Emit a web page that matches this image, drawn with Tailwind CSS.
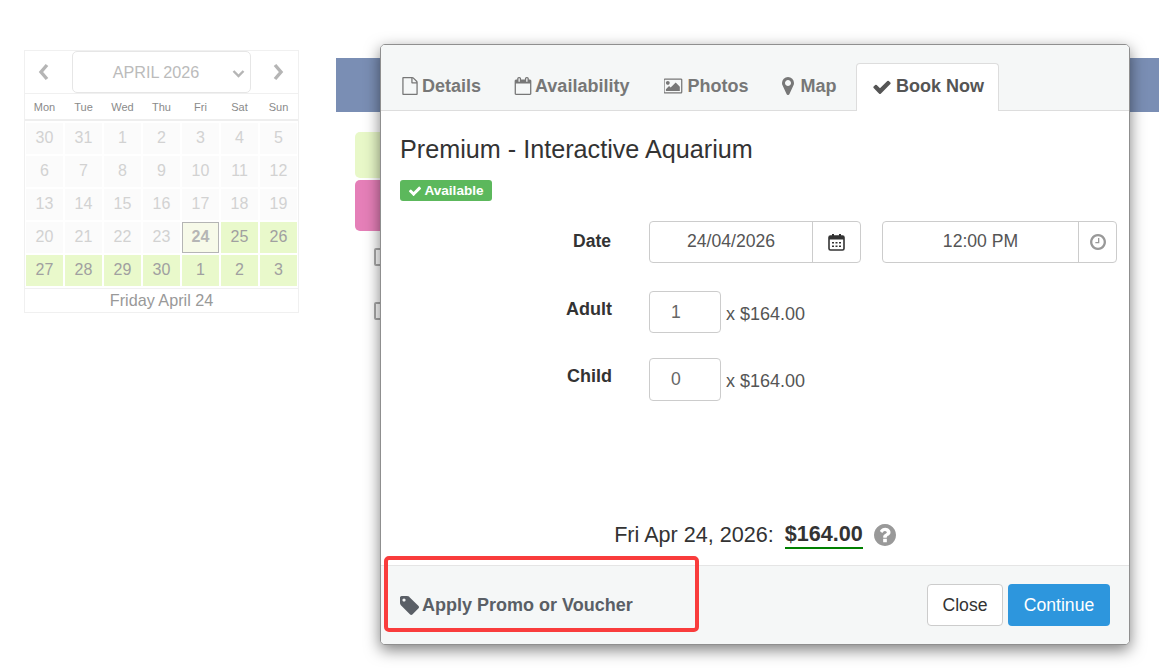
<!DOCTYPE html>
<html lang="en">
<head>
  <meta charset="UTF-8">
  <title>Book Now</title>
  <script src="https://cdn.jsdelivr.net/npm/@tailwindcss/browser@4"></script>
</head>
<body class="bg-white font-['Liberation_Sans',Arial,sans-serif] text-[#333]">
<div class="relative w-[1159px] h-[669px] overflow-hidden">

  <!-- page behind the modal -->
  <div class="flex items-start pt-[50px] pl-[24px]">
    <!-- calendar -->
    <div class="w-[275px] h-[263px] border border-[#f0f0f0] flex flex-col shrink-0">
      <div class="flex items-center h-[43px] border-b border-[#f0f0f0]">
        <div class="w-[47px] flex justify-center pr-[10px]">
          <svg class="w-[14px] h-[18px]" viewBox="0 0 14 18"><path d="M10 2 L4 9 L10 16" fill="none" stroke="#b5b5b5" stroke-width="3.4"/></svg>
        </div>
        <div class="relative w-[179px] h-[42px] border border-[#e6e6e6] rounded-[5px] flex items-center justify-center pt-[1px] text-[16.200px] text-[#bbb] pr-[11px]">APRIL 2026
          <svg class="absolute right-[5px] top-[17px] w-[13px] h-[10px]" viewBox="0 0 13 10"><path d="M1.500 2 L6.500 7 L11.500 2" fill="none" stroke="#b5b5b5" stroke-width="2.400"/></svg>
        </div>
        <div class="flex-1 flex justify-center pl-[6px]">
          <svg class="w-[14px] h-[18px]" viewBox="0 0 14 18"><path d="M4 2 L10 9 L4 16" fill="none" stroke="#b5b5b5" stroke-width="3.4"/></svg>
        </div>
      </div>
      <div class="grid grid-cols-[repeat(7,37px)] gap-x-[2px] px-[1px] pt-[1px] h-[27px] items-center text-center text-[11px] text-[#8a8a8a] border-b-2 border-[#eee]">
        <span>Mon</span><span>Tue</span><span>Wed</span><span>Thu</span><span>Fri</span><span>Sat</span><span>Sun</span>
      </div>
      <div class="grid grid-cols-[repeat(7,37px)] auto-rows-[31px] gap-[2px] px-[1px] pt-[2px] text-[16px] text-center leading-[30px] text-[#d2d2d2]">
        <div class="bg-[#fbfbfb]">30</div><div class="bg-[#fbfbfb]">31</div><div class="bg-[#fbfbfb]">1</div><div class="bg-[#fbfbfb]">2</div><div class="bg-[#fbfbfb]">3</div><div class="bg-[#fbfbfb]">4</div><div class="bg-[#fbfbfb]">5</div>
        <div class="bg-[#fbfbfb]">6</div><div class="bg-[#fbfbfb]">7</div><div class="bg-[#fbfbfb]">8</div><div class="bg-[#fbfbfb]">9</div><div class="bg-[#fbfbfb]">10</div><div class="bg-[#fbfbfb]">11</div><div class="bg-[#fbfbfb]">12</div>
        <div class="bg-[#fbfbfb]">13</div><div class="bg-[#fbfbfb]">14</div><div class="bg-[#fbfbfb]">15</div><div class="bg-[#fbfbfb]">16</div><div class="bg-[#fbfbfb]">17</div><div class="bg-[#fbfbfb]">18</div><div class="bg-[#fbfbfb]">19</div>
        <div class="bg-[#fbfbfb]">20</div><div class="bg-[#fbfbfb]">21</div><div class="bg-[#fbfbfb]">22</div><div class="bg-[#fbfbfb]">23</div>
        <div class="bg-[#f7fae9] border border-[#b5b5b5] font-bold text-[#b5b5b5] leading-[28px]">24</div>
        <div class="bg-[#e9f9cb] text-[#a0a0a0]">25</div><div class="bg-[#e9f9cb] text-[#a0a0a0]">26</div>
        <div class="bg-[#e9f9cb] text-[#a0a0a0]">27</div><div class="bg-[#e9f9cb] text-[#a0a0a0]">28</div><div class="bg-[#e9f9cb] text-[#a0a0a0]">29</div><div class="bg-[#e9f9cb] text-[#a0a0a0]">30</div><div class="bg-[#e9f9cb] text-[#a0a0a0]">1</div><div class="bg-[#e9f9cb] text-[#a0a0a0]">2</div><div class="bg-[#e9f9cb] text-[#a0a0a0]">3</div>
      </div>
      <div class="mt-[2px] flex-1 border-t border-[#f0f0f0] text-center text-[16.200px] leading-[23px] text-[#999]">Friday April 24</div>
    </div>

    <!-- listing column, mostly hidden by the modal -->
    <div class="ml-[37px] pt-[8px] flex-1 min-w-0">
      <div class="h-[54px] bg-[#7a8eb4]"></div>
      <div class="ml-[19px] mt-[20px] flex flex-col gap-[2px]">
        <div class="w-[60px] h-[46px] rounded-[5px] bg-[#e8f8c8]"></div>
        <div class="w-[60px] h-[51px] rounded-[5px] bg-[#e57fb8]"></div>
      </div>
      <div class="ml-[19px] pl-[19px] mt-[17px] flex flex-col gap-[36px]">
        <div class="w-[14px] h-[18px] rounded-[2px] border-2 border-[#aaa]"></div>
        <div class="w-[14px] h-[18px] rounded-[2px] border-2 border-[#aaa]"></div>
      </div>
    </div>
  </div>

  <!-- modal -->
  <div class="absolute left-[380px] top-[44px] w-[750px] h-[601px] flex flex-col bg-white border border-[#8f8f8f] rounded-[5px] shadow-[0_5px_15px_rgba(0,0,0,0.5)] overflow-hidden">
    <div class="h-[66px] shrink-0 bg-[#f5f7f7] border-b border-[#ddd] flex items-end pl-[10px]">
      <div class="h-[65px] flex items-center gap-[5px] px-[10px] pt-[17px] text-[18px] font-bold text-[#777]">
        <svg class="w-[18px] h-[18px]" viewBox="0 0 1792 1792" fill="#777"><path d="M1596 380q28 28 48 76t20 88v1152q0 40-28 68t-68 28h-1344q-40 0-68-28t-28-68v-1600q0-40 28-68t68-28h896q40 0 88 20t76 48zm-444-244v376h376q-10-29-22-41l-313-313q-12-12-41-22zm384 1528v-1024h-416q-40 0-68-28t-28-68v-416h-768v1536h1280z"/></svg>
        <span class="-ml-[2px]">Details</span>
      </div>
      <div class="h-[65px] flex items-center gap-[3px] ml-[13px] px-[10px] pt-[17px] text-[18px] font-bold text-[#777]">
        <svg class="w-[18px] h-[18px]" viewBox="0 0 1792 1792" fill="#777"><path d="M192 1664h1408v-1024h-1408v1024zm384-1216v-288q0-14-9-23t-23-9h-64q-14 0-23 9t-9 23v288q0 14 9 23t23 9h64q14 0 23-9t9-23zm768 0v-288q0-14-9-23t-23-9h-64q-14 0-23 9t-9 23v288q0 14 9 23t23 9h64q14 0 23-9t9-23zm384-64v1280q0 52-38 90t-90 38h-1408q-52 0-90-38t-38-90v-1280q0-52 38-90t90-38h128v-96q0-66 47-113t113-47h64q66 0 113 47t47 113v96h384v-96q0-66 47-113t113-47h64q66 0 113 47t47 113v96h128q52 0 90 38t38 90z"/></svg>
        <span>Availability</span>
      </div>
      <div class="h-[65px] flex items-center gap-[4px] ml-[15px] px-[10px] pt-[17px] text-[18px] font-bold text-[#777]">
        <svg class="w-[19px] h-[18px]" viewBox="0 0 1920 1792" fill="#777"><path d="M576 576q0 80-56 136t-136 56-136-56-56-136 56-136 136-56 136 56 56 136zm1024 384v448h-1408v-192l320-320 160 160 512-512zm96-704h-1600q-13 0-22.500 9.500t-9.500 22.500v1216q0 13 9.500 22.500t22.500 9.500h1600q13 0 22.500-9.500t9.500-22.500v-1216q0-13-9.500-22.500t-22.500-9.500zm160 32v1216q0 66-47 113t-113 47h-1600q-66 0-113-47t-47-113v-1216q0-66 47-113t113-47h1600q66 0 113 47t47 113z"/></svg>
        <span>Photos</span>
      </div>
      <div class="h-[65px] flex items-center gap-[6px] ml-[14px] px-[10px] pt-[17px] text-[18px] font-bold text-[#777]">
        <svg class="w-[12px] h-[18px]" viewBox="0 128 1024 1536" fill="#777"><path d="M768 640q0-106-75-181t-181-75-181 75-75 181 75 181 181 75 181-75 75-181zm256 0q0 109-33 179l-364 774q-16 33-47.500 52t-67.500 19-67.500-19-46.500-52l-365-774q-33-70-33-179 0-212 150-362t362-150 362 150 150 362z"/></svg>
        <span>Map</span>
      </div>
      <div class="relative top-[1px] h-[48px] ml-[10px] w-[143px] flex items-center justify-center gap-[4px] pb-[2px] bg-white border border-[#ddd] border-b-0 rounded-t-[4px] text-[18px] font-bold text-[#555]">
        <svg class="w-[20px] h-[20px]" viewBox="0 0 1792 1792" fill="#555"><path d="M1671 566q0 40-28 68l-724 724-136 136q-28 28-68 28t-68-28l-136-136-362-362q-28-28-28-68t28-68l136-136q28-28 68-28t68 28l294 295 656-657q28-28 68-28t68 28l136 136q28 28 28 68z"/></svg>
        <span>Book Now</span>
      </div>
    </div>

    <div class="flex-1 flex flex-col min-h-0 pl-[19px] pr-[12px] pt-[26px] pb-[16px]">
      <h2 class="text-[25.200px] leading-[25px] text-[#333]">Premium - Interactive Aquarium</h2>
      <div class="mt-[18px] w-[92px] h-[21px] bg-[#5cb85c] rounded-[3px] flex items-center justify-center gap-[2px] pt-[1px] text-[13.600px] font-bold text-white">
        <svg class="w-[14px] h-[14px] -mt-[1px]" viewBox="0 0 1792 1792" fill="#fff"><path d="M1671 566q0 40-28 68l-724 724-136 136q-28 28-68 28t-68-28l-136-136-362-362q-28-28-28-68t28-68l136-136q28-28 68-28t68 28l294 295 656-657q28-28 68-28t68 28l136 136q28 28 28 68z"/></svg>
        <span>Available</span>
      </div>

      <div class="mt-[20px] flex items-center">
        <div class="w-[211px] mr-[1px] pb-[2px] text-right text-[17.500px] font-bold">Date</div>
        <div class="ml-[37px] w-[212px] h-[42px] flex border border-[#ccc] rounded-[4px]">
          <div class="flex-1 flex items-center justify-center pb-[1px] text-[17.600px] text-[#555]">24/04/2026</div>
          <div class="w-[48px] border-l border-[#ccc] flex items-center justify-center">
            <svg class="w-[17px] h-[18px]" viewBox="0 0 17 18"><rect x="1" y="3" width="15" height="14" rx="1.500" fill="#fff" stroke="#333" stroke-width="1.600"/><rect x="1" y="3" width="15" height="3.500" fill="#333"/><rect x="4" y="1" width="2" height="3.500" fill="#333"/><rect x="11" y="1" width="2" height="3.500" fill="#333"/><path d="M4 9h2v1.500H4zM7.500 9h2v1.500h-2zM11 9h2v1.500h-2zM4 12.500h2V14H4zM7.500 12.500h2V14h-2zM11 12.500h2V14h-2z" fill="#333"/></svg>
          </div>
        </div>
        <div class="ml-[21px] w-[235px] h-[42px] flex border border-[#ccc] rounded-[4px]">
          <div class="flex-1 flex items-center justify-center pb-[1px] text-[17.600px] text-[#555]">12:00 PM</div>
          <div class="w-[38px] border-l border-[#ccc] flex items-center justify-center">
            <svg class="w-[16px] h-[16px]" viewBox="128 128 1536 1536" fill="#999"><path d="M1024 544v448q0 14-9 23t-23 9h-320q-14 0-23-9t-9-23v-64q0-14 9-23t23-9h224v-352q0-14 9-23t23-9h64q14 0 23 9t9 23zm416 352q0-148-73-273t-198-198-273-73-273 73-198 198-73 273 73 273 198 198 273 73 273-73 198-198 73-273zm224 0q0 209-103 385.500t-279.500 279.500-385.500 103-385.500-103-279.500-279.500-103-385.500 103-385.500 279.500-279.500 385.500-103 385.500 103 279.500 279.500 103 385.500z"/></svg>
          </div>
        </div>
      </div>

      <div class="mt-[28px] flex items-start">
        <div class="w-[212px] pt-[5px] text-right text-[18px] font-bold">Adult</div>
        <div class="ml-[37px] w-[72px] h-[42px] border border-[#ccc] rounded-[4px] flex items-center pl-[21px] text-[17.600px] text-[#666]">1</div>
        <div class="ml-[5px] mt-[10px] text-[18px] text-[#555]">x $164.00</div>
      </div>

      <div class="mt-[25px] flex items-start">
        <div class="w-[212px] pt-[5px] text-right text-[18px] font-bold">Child</div>
        <div class="ml-[37px] w-[72px] h-[43px] border border-[#ccc] rounded-[4px] flex items-center pl-[21px] text-[17.600px] text-[#666]">0</div>
        <div class="ml-[5px] mt-[10px] text-[18px] text-[#555]">x $164.00</div>
      </div>

      <div class="mt-auto flex items-center justify-center pr-[7px] text-[21.600px] leading-[26px]">
        <span>Fri Apr 24, 2026:</span>
        <span class="ml-[11px] font-bold border-b-2 border-[#008000]">$164.00</span>
        <svg class="ml-[11px] w-[22px] h-[22px]" viewBox="128 128 1536 1536" fill="#999"><path d="M1024 1376v-192q0-14-9-23t-23-9h-192q-14 0-23 9t-9 23v192q0 14 9 23t23 9h192q14 0 23-9t9-23zm256-672q0-88-55.500-163t-138.500-116-170-41q-243 0-371 213-15 24 8 42l132 100q7 6 19 6 16 0 25-12 53-68 86-92 34-24 86-24 48 0 85.500 26t37.500 59q0 38-20 61t-68 45q-63 28-115.500 86.500t-52.500 125.500v36q0 14 9 23t23 9h192q14 0 23-9t9-23q0-19 21.500-49.500t54.500-49.500q32-18 49-28.500t46-35 44.500-48 28-60.500 12.500-81zm384 192q0 209-103 385.500t-279.500 279.500-385.500 103-385.500-103-279.500-279.500-103-385.500 103-385.500 279.500-279.500 385.500-103 385.500 103 279.500 279.500 103 385.500z"/></svg>
      </div>
    </div>

    <div class="h-[79px] shrink-0 bg-[#f5f7f7] border-t border-[#e5e5e5] flex items-start pl-[19px] pr-[19px]">
      <div class="mt-[26px] flex items-center gap-[3px] text-[18px] font-bold text-[#5a5f66]">
        <svg class="w-[19px] h-[19px]" viewBox="0 0 1515 1515" fill="#5a5f66"><path transform="translate(0 -128)" d="M448 448q0-53-37.500-90.500t-90.500-37.500-90.500 37.500-37.500 90.500 37.500 90.500 90.500 37.500 90.500-37.500 37.500-90.500zm1067 576q0 53-37 90l-491 492q-39 37-91 37-53 0-90-37l-715-716q-38-37-64.500-101t-26.500-117v-416q0-52 38-90t90-38h416q53 0 117 26.500t102 64.500l715 714q37 39 37 91z"/></svg>
        <span>Apply Promo or Voucher</span>
      </div>
      <div class="ml-auto mt-[18px] flex gap-[5px]">
        <div class="w-[76px] h-[42px] bg-white border border-[#ccc] rounded-[4px] flex items-center justify-center text-[17.600px] text-[#333]">Close</div>
        <div class="w-[102px] h-[42px] bg-[#2d96dd] rounded-[4px] flex items-center justify-center text-[17.600px] text-white">Continue</div>
      </div>
    </div>
  </div>

  <!-- red annotation drawn on top of the screenshot -->
  <div class="absolute left-[384px] top-[556px] w-[315px] h-[76px] border-[4px] border-[#f93c3c] rounded-[5px]"></div>
</div>
</body>
</html>
